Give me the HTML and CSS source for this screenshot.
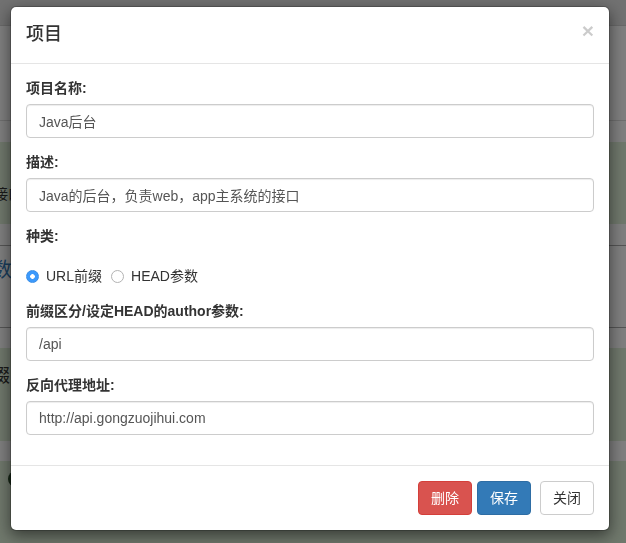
FILE: index.html
```html
<!DOCTYPE html>
<html lang="zh-CN">
<head>
<meta charset="utf-8">
<title>项目</title>
<link rel="stylesheet" href="styles.css">
</head>
<body>
<div class="page">
  <div class="topbar"></div>
  <div class="band band-top"></div>
  <div class="gap gap-a"></div>
  <div class="band success band-1"><span class="bg-text">接口</span></div>
  <div class="gap gap-b"></div>
  <div class="band band-2"><span class="bg-title">数</span></div>
  <div class="gap gap-c"></div>
  <div class="band success band-3"><span class="bg-title dark">缀</span></div>
  <div class="gap gap-c"></div>
  <div class="band success band-4"><span class="bg-pill"></span></div>
</div>

<div class="backdrop"></div>

<div class="modal">
  <div class="modal-dialog">
    <div class="modal-content">
      <div class="modal-header">
        <h4 class="modal-title">项目</h4>
        <button class="close" type="button">×</button>
      </div>
      <div class="modal-body">
        <div class="form-group">
          <label class="control-label">项目名称:</label>
          <input class="form-control" type="text" value="Java后台">
        </div>
        <div class="form-group">
          <label class="control-label">描述:</label>
          <input class="form-control" type="text" value="Java的后台，负责web，app主系统的接口">
        </div>
        <div class="form-group">
          <label class="control-label">种类:</label>
          <div class="radio-row">
            <label class="radio-opt"><input type="radio" name="kind" checked><span>URL前缀</span></label>
            <label class="radio-opt"><input type="radio" name="kind"><span>HEAD参数</span></label>
          </div>
        </div>
        <div class="form-group">
          <label class="control-label">前缀区分/设定HEAD的author参数:</label>
          <input class="form-control" type="text" value="/api">
        </div>
        <div class="form-group">
          <label class="control-label">反向代理地址:</label>
          <input class="form-control" type="text" value="http://api.gongzuojihui.com">
        </div>
      </div>
      <div class="modal-footer">
        <button class="btn btn-danger" type="button">删除</button>
        <button class="btn btn-primary" type="button">保存</button>
        <button class="btn btn-default" type="button">关闭</button>
      </div>
    </div>
  </div>
</div>
</body>
</html>
```

FILE: styles.css
```css
* {
  box-sizing: border-box;
}

html,
body {
  margin: 0;
  height: 100%;
}

body {
  font-family: "Liberation Sans", "Noto Sans CJK SC", sans-serif;
  font-size: 14px;
  line-height: 1.42857;
  color: #333;
  background: #fff;
  overflow: hidden;
}

/* ---------- page behind the dialog ---------- */
.topbar {
  height: 26px;
  background: #e2e2e2;
  border-bottom: 1px solid #d2d2d2;
}

.band-top {
  height: 95px;
  border-bottom: 1px solid #ddd;
}

.gap-a {
  height: 21px;
}

.success {
  background: #dff0d8;
}

.band-1 {
  height: 82px;
  padding-top: 43px;
}

.gap-b {
  height: 22px;
  border-bottom: 1px solid #aaa;
}

.band-2 {
  height: 82px;
  padding-top: 12px;
  border-bottom: 1px solid #aaa;
}

.gap-c {
  height: 20px;
}

.band-3 {
  height: 93px;
  padding-top: 16px;
}

.band-4 {
  height: 100px;
  padding-top: 10px;
}

.bg-text {
  display: inline-block;
  margin-left: -6px;
  color: #333;
}

.bg-title {
  display: inline-block;
  margin-left: -8px;
  font-size: 20px;
  line-height: 24px;
  color: #337ab7;
}

.bg-title.dark {
  font-size: 18px;
  color: #333;
}

.bg-pill {
  display: block;
  width: 30px;
  height: 16px;
  margin-left: 8px;
  border-radius: 8px;
  background: #2c4a2c;
}

/* ---------- backdrop + dialog ---------- */
.backdrop {
  position: fixed;
  inset: 0;
  background: #000;
  opacity: 0.5;
}

.modal {
  position: fixed;
  inset: 0;
}

.modal-dialog {
  width: 600px;
  margin: 6px 0 0 10px;
}

.modal-content {
  background: #fff;
  background-clip: padding-box;
  border: 1px solid rgba(0, 0, 0, 0.2);
  border-radius: 6px;
  box-shadow: 0 5px 15px rgba(0, 0, 0, 0.5);
}

.modal-header {
  display: flex;
  justify-content: space-between;
  align-items: flex-start;
  padding: 15px;
  border-bottom: 1px solid #e5e5e5;
}

.modal-title {
  margin: 0;
  font-size: 18px;
  font-weight: 500;
  line-height: 1.42857;
}

.close {
  margin-top: -2px;
  padding: 0;
  border: 0;
  background: none;
  font-family: inherit;
  font-size: 21px;
  font-weight: bold;
  line-height: 1;
  color: #000;
  opacity: 0.2;
}

.modal-body {
  padding: 15px 15px 15px;
}

.form-group {
  margin-bottom: 15px;
}

.control-label {
  display: block;
  margin-bottom: 5px;
  font-weight: bold;
}

.form-control {
  display: block;
  width: 100%;
  height: 34px;
  padding: 6px 12px;
  font: inherit;
  color: #555;
  background: #fff;
  border: 1px solid #ccc;
  border-radius: 4px;
  box-shadow: inset 0 1px 1px rgba(0, 0, 0, 0.075);
}

.radio-row {
  display: flex;
  align-items: center;
  height: 20px;
  margin-top: 20px;
}

.radio-opt {
  display: flex;
  align-items: center;
  gap: 7px;
  margin-right: 9px;
  font-weight: normal;
}

.radio-opt input {
  appearance: none;
  -webkit-appearance: none;
  width: 13px;
  height: 13px;
  margin: 0;
  border-radius: 50%;
  border: 1px solid #b3b3b3;
  background: #fff;
}

.radio-opt input:checked {
  border-color: #3a8ee6;
  background: radial-gradient(circle, #fff 0 2px, #3b99fc 2.6px);
}

.modal-footer {
  display: flex;
  justify-content: flex-end;
  padding: 15px;
  border-top: 1px solid #e5e5e5;
}

.btn {
  height: 34px;
  padding: 6px 12px;
  font: inherit;
  line-height: 20px;
  border: 1px solid transparent;
  border-radius: 4px;
}

.btn-danger {
  color: #fff;
  background: #d9534f;
  border-color: #d43f3a;
}

.btn-primary {
  margin-left: 5px;
  color: #fff;
  background: #337ab7;
  border-color: #2e6da4;
}

.btn-default {
  margin-left: 9px;
  color: #333;
  background: #fff;
  border-color: #ccc;
}
```
